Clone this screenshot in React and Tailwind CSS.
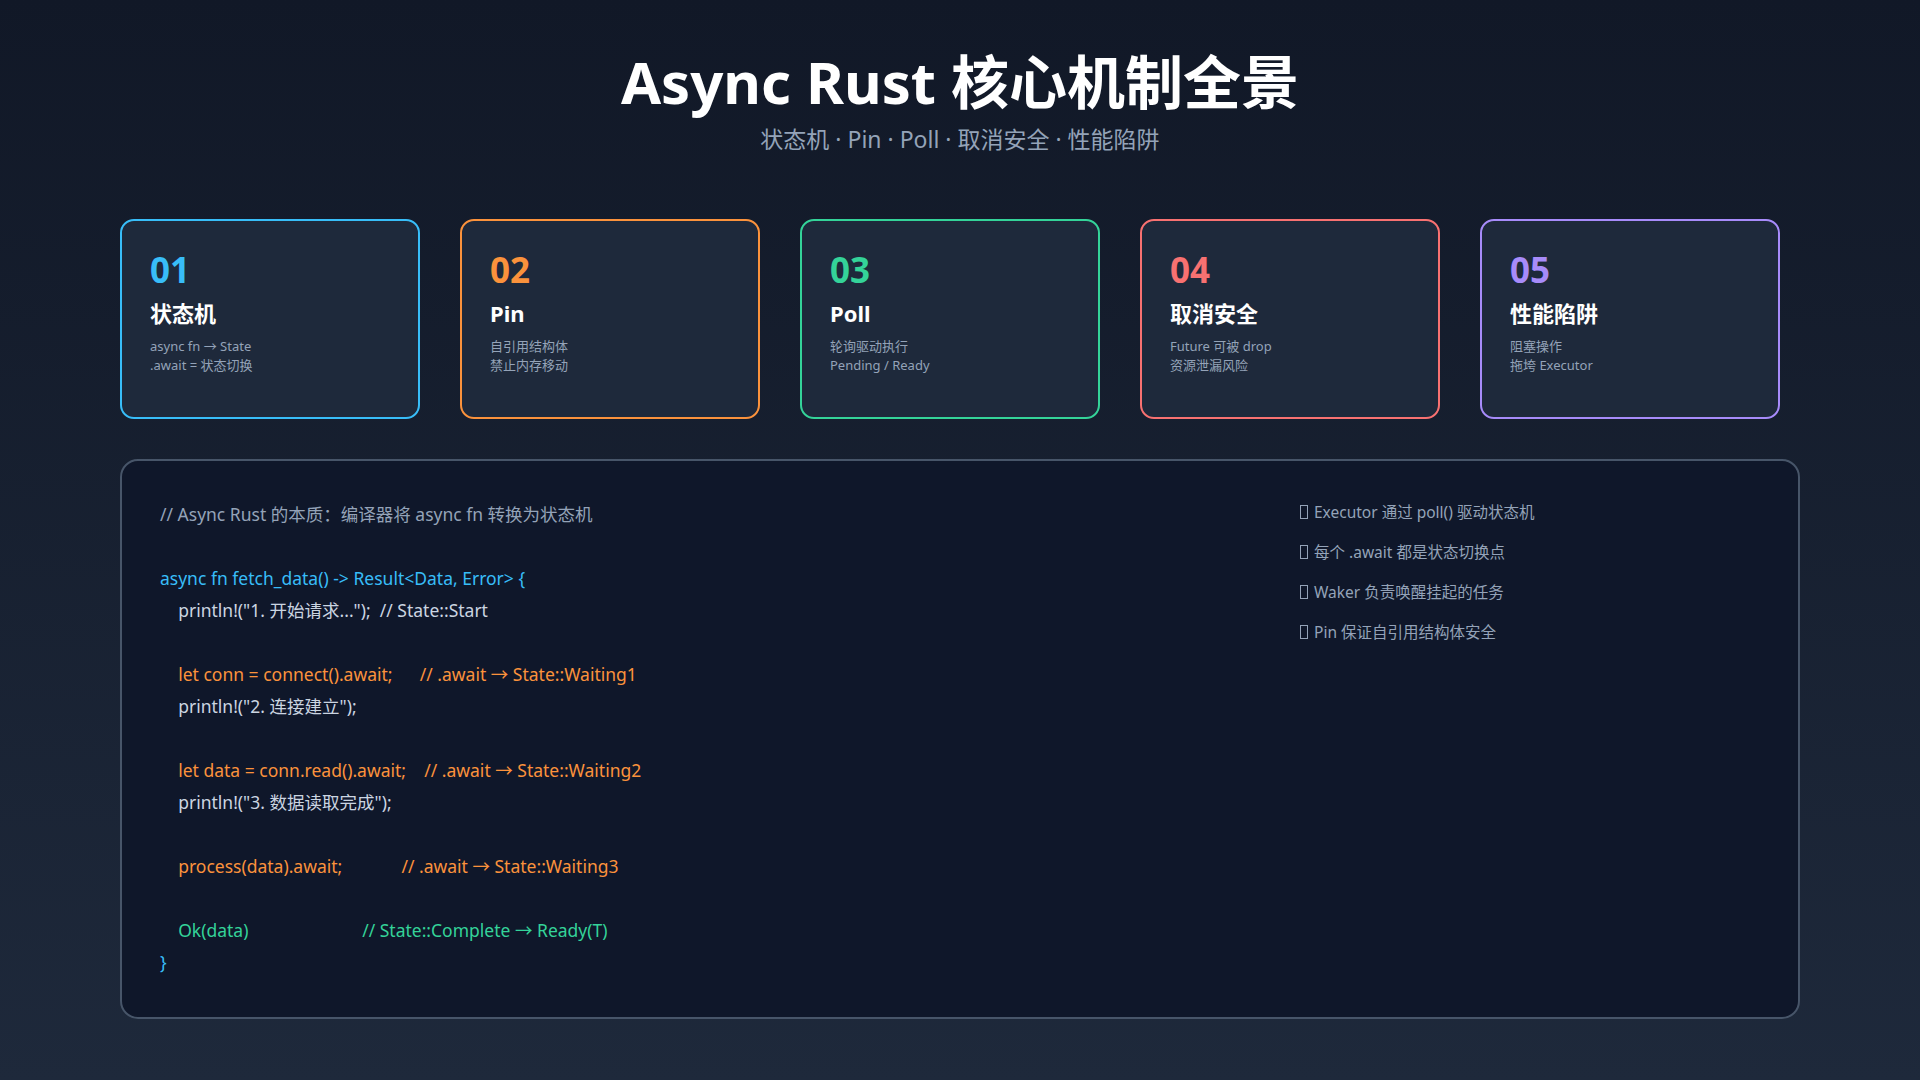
import React from "react";

const cards = [
  { n: "01", t: "状态机", d: ["async fn → State", ".await = 状态切换"], b: "border-[#38bdf8]", c: "text-[#38bdf8]" },
  { n: "02", t: "Pin", d: ["自引用结构体", "禁止内存移动"], b: "border-[#fb923c]", c: "text-[#fb923c]" },
  { n: "03", t: "Poll", d: ["轮询驱动执行", "Pending / Ready"], b: "border-[#34d399]", c: "text-[#34d399]" },
  { n: "04", t: "取消安全", d: ["Future 可被 drop", "资源泄漏风险"], b: "border-[#f87171]", c: "text-[#f87171]" },
  { n: "05", t: "性能陷阱", d: ["阻塞操作", "拖垮 Executor"], b: "border-[#a78bfa]", c: "text-[#a78bfa]" },
];

const code = [
  ["text-[#94a3b8]", "// Async Rust 的本质：编译器将 async fn 转换为状态机"],
  ["", ""],
  ["text-[#38bdf8]", "async fn fetch_data() -> Result<Data, Error> {"],
  ["text-[#cbd5e1]", "    println!(\"1. 开始请求...\");  // State::Start"],
  ["", ""],
  ["text-[#fb923c]", "    let conn = connect().await;      // .await → State::Waiting1"],
  ["text-[#cbd5e1]", "    println!(\"2. 连接建立\");"],
  ["", ""],
  ["text-[#fb923c]", "    let data = conn.read().await;    // .await → State::Waiting2"],
  ["text-[#cbd5e1]", "    println!(\"3. 数据读取完成\");"],
  ["", ""],
  ["text-[#fb923c]", "    process(data).await;             // .await → State::Waiting3"],
  ["", ""],
  ["text-[#34d399]", "    Ok(data)                         // State::Complete → Ready(T)"],
  ["text-[#38bdf8]", "}"],
];

const notes = [
  "Executor 通过 poll() 驱动状态机",
  "每个 .await 都是状态切换点",
  "Waker 负责唤醒挂起的任务",
  "Pin 保证自引用结构体安全",
];

export default function App() {
  return (
    <div
      className="w-[1920px] h-[1080px] bg-gradient-to-b from-[#111827] to-[#1e293b] text-white px-[120px] pt-[44px]"
      style={{ fontFamily: '"Noto Sans", "Noto Sans CJK SC", sans-serif' }}
    >
      <h1 className="text-center text-[58px] font-bold leading-[76px]">Async Rust 核心机制全景</h1>
      <p className="text-center text-[23px] text-[#94a3b8] mt-[2px]">状态机 · Pin · Poll · 取消安全 · 性能陷阱</p>

      <div className="flex gap-[40px] mt-[62px] pr-[20px]">
        {cards.map((c) => (
          <div key={c.n} className={`w-[300px] h-[200px] rounded-[14px] border-2 ${c.b} bg-[#1e293b] px-[28px] pt-[26px]`}>
            <div className={`text-[35px] font-bold leading-[46px] ${c.c}`}>{c.n}</div>
            <div className="text-[22px] font-bold mt-[4px] leading-[32px]">{c.t}</div>
            <div className="text-[13px] text-[#94a3b8] mt-[8px] leading-[19px]">
              {c.d.map((l) => (
                <div key={l}>{l}</div>
              ))}
            </div>
          </div>
        ))}
      </div>

      <div className="mt-[40px] h-[560px] rounded-[18px] border-2 border-[#475569] bg-[#0f172a] flex pl-[38px] pt-[37px]">
        <div className="w-[1140px] text-[17.5px] leading-[32px] whitespace-pre">
          {code.map(([cl, t], i) => (
            <div key={i} className={`${cl} h-[32px]`}>{t}</div>
          ))}
        </div>
        <div className="pt-[2px] text-[15.5px] text-[#94a3b8] flex flex-col gap-[16px]">
          {notes.map((n) => (
            <div key={n} className="flex items-center gap-[6px] leading-[24px]">
              <span className="inline-block w-[8px] h-[14px] border border-[#94a3b8]" />
              {n}
            </div>
          ))}
        </div>
      </div>
    </div>
  );
}
